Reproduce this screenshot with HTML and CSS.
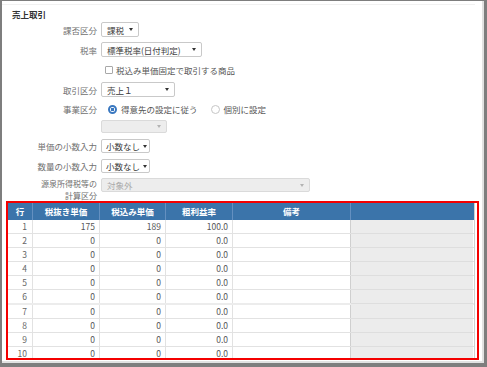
FILE: index.html
```html
<!doctype html>
<html lang="ja">
<head>
<meta charset="utf-8" />
<title>売上取引</title>
<link rel="stylesheet" href="styles.css">
</head>
<body>

<div class="frame">
	<div class="panel">
		<h1 class="title">売上取引</h1>

		<div class="form">
			<div class="row r1">
				<span class="lbl">課否区分</span>
				<div class="select w-38"><span>課税</span><i class="arrow"></i></div>
			</div>
			<div class="row">
				<span class="lbl">税率</span>
				<div class="select w-101"><span>標準税率(日付判定)</span><i class="arrow"></i></div>
			</div>
			<div class="row">
				<span class="lbl"></span>
				<label class="check"><i class="box"></i>税込み単価固定で取引する商品</label>
			</div>
			<div class="row">
				<span class="lbl">取引区分</span>
				<div class="select w-74"><span>売上１</span><i class="arrow"></i></div>
			</div>
			<div class="row r-radio">
				<span class="lbl">事業区分</span>
				<label class="radio on"><i class="dot"></i>得意先の設定に従う</label>
				<label class="radio"><i class="dot"></i>個別に設定</label>
			</div>
			<div class="row r-sub">
				<span class="lbl"></span>
				<div class="select off w-66"><span></span><i class="arrow"></i></div>
			</div>
			<div class="row r-dec">
				<span class="lbl">単価の小数入力</span>
				<div class="select w-49"><span>小数なし</span><i class="arrow"></i></div>
			</div>
			<div class="row r-dec">
				<span class="lbl">数量の小数入力</span>
				<div class="select w-49"><span>小数なし</span><i class="arrow"></i></div>
			</div>
			<div class="row r-tall">
				<span class="lbl">源泉所得税等の<br>計算区分</span>
				<div class="select off w-209"><span>対象外</span><i class="arrow"></i></div>
			</div>
		</div>

		<div class="grid-box">
			<div class="grid">
				<div class="gr head">
					<div>行</div><div>税抜き単価</div><div>税込み単価</div><div>粗利益率</div><div>備考</div><div></div>
				</div>
				<div class="gr"><div>1</div><div>175</div><div>189</div><div>100.0</div><div></div><div></div></div>
				<div class="gr"><div>2</div><div>0</div><div>0</div><div>0.0</div><div></div><div></div></div>
				<div class="gr"><div>3</div><div>0</div><div>0</div><div>0.0</div><div></div><div></div></div>
				<div class="gr"><div>4</div><div>0</div><div>0</div><div>0.0</div><div></div><div></div></div>
				<div class="gr"><div>5</div><div>0</div><div>0</div><div>0.0</div><div></div><div></div></div>
				<div class="gr seam"><div>6</div><div>0</div><div>0</div><div>0.0</div><div></div><div></div></div>
				<div class="gr"><div>7</div><div>0</div><div>0</div><div>0.0</div><div></div><div></div></div>
				<div class="gr"><div>8</div><div>0</div><div>0</div><div>0.0</div><div></div><div></div></div>
				<div class="gr"><div>9</div><div>0</div><div>0</div><div>0.0</div><div></div><div></div></div>
				<div class="gr"><div>10</div><div>0</div><div>0</div><div>0.0</div><div></div><div></div></div>
			</div>
		</div>
	</div>
</div>

</body>
</html>
```

FILE: styles.css
```css
:root {
	--label: #707070;
	--text: #3a3a3a;
	--line: #e2e2e2;
	--head: #3b74aa;
	font-family: "Noto Sans CJK JP", "Noto Sans", sans-serif;
	font-size: 8.5px;
}

body, html {
	margin: 0;
	padding: 0;
	background: #fff;
}

.frame {
	box-sizing: border-box;
	width: 487px;
	height: 367px;
	border-style: solid;
	border-color: #7e7e7e;
	border-width: 1px 3px 4px 2px;
	box-shadow: inset -2px -2px 0 #e2e2e2;
	overflow: hidden;
}

.panel {
	margin-top: 3px;
	margin-right: 9px;
	border-top: 1px solid #f1f1f1;
}

.title {
	margin: 0;
	padding: 3px 0 0 10px;
	height: 12px;
	line-height: 12px;
	font-size: 8.5px;
	font-weight: 600;
	color: #333;
}

/* form rows */

.form {
	display: flex;
	flex-direction: column;
	gap: 5px;
}

.row {
	display: flex;
	align-items: center;
	height: 15px;
}

.row.r1 { margin-top: 2px; }
.row.r-radio { height: 14px; }
.row.r-sub { height: 13px; margin-top: -1px; }
.row.r-dec { height: 14px; margin-top: 1px; }
.row.r-tall {
	height: 19px;
	align-items: flex-start;
}

.lbl {
	flex: none;
	width: 95px;
	margin-right: 4px;
	text-align: right;
	color: var(--label);
	line-height: 10px;
	white-space: nowrap;
}

.r-tall .lbl {
	font-size: 8px;
	line-height: 11.7px;
}

.select {
	box-sizing: border-box;
	display: flex;
	align-items: center;
	height: 15px;
	padding: 0 5px 0 5px;
	border: 1px solid #c9c9c9;
	border-radius: 2px;
	background: #fff;
	color: var(--text);
	white-space: nowrap;
}

.select span { margin-right: 3px; }

.r-dec .select { height: 14px; padding: 0 3px 0 4px; }
.r-sub .select { height: 13px; }
.r-tall .select { height: 14px; }

.select .arrow {
	margin-left: auto;
	flex: none;
	width: 0;
	height: 0;
	border-left: 2px solid transparent;
	border-right: 2px solid transparent;
	border-top: 3px solid #333;
}

.select.off {
	background: #ededed;
	border-color: #dadada;
	color: #a9a9a9;
}

.select.off .arrow { border-top-color: #b3b3b3; }

.w-38 { width: 38px; }
.w-101 { width: 101px; }
.w-74 { width: 74px; }
.w-66 { width: 66px; }
.w-49 { width: 49px; }
.w-209 { width: 209px; }

.check, .radio {
	display: flex;
	align-items: center;
	color: #555;
	white-space: nowrap;
}

.check .box {
	box-sizing: border-box;
	width: 8px;
	height: 8px;
	margin: 0 3px 0 4px;
	border: 1px solid #a8a8a8;
	border-radius: 1px;
}

.radio .dot {
	box-sizing: border-box;
	width: 9px;
	height: 9px;
	margin: 0 4px 0 7px;
	border: 1px solid #c6c6c6;
	border-radius: 50%;
}

.radio + .radio .dot { margin-left: 13px; }

.radio.on .dot {
	border: 2px solid #3a78c0;
	background: radial-gradient(circle, #3a78c0 0 1.6px, #fff 2px);
}

/* grid */

.grid-box {
	box-sizing: border-box;
	height: 159px;
	margin: 4px 0 0 4px;
	width: 473px;
	border: 2px solid #f40000;
	overflow: hidden;
}

.grid {
	width: 466px;
	border-right: 1px solid #d0d0d0;
}

.gr {
	display: grid;
	grid-template-columns: 25px 67px 66px 67px 118px 122px;
	box-sizing: border-box;
	height: 14px;
	border-bottom: 1px solid var(--line);
	color: #555;
	line-height: 13px;
}

.gr > div {
	border-right: 1px solid var(--line);
	text-align: right;
	padding-right: 4px;
	white-space: nowrap;
}

.gr > div:first-child {
	padding-right: 5px;
	color: #666;
}

.gr > div:nth-child(5) {
	border-right-color: #cfcfcf;
}

.gr > div:last-child {
	background: #ececec;
	border-right: none;
	border-bottom: 1px solid #dedede;
	margin-bottom: -1px;
}

.gr.seam {
	border-bottom: 2px solid #ececec;
	height: 15px;
}

.gr.head {
	height: 17px;
	line-height: 17px;
	background: var(--head);
	border-bottom: none;
	color: #fff;
	font-weight: 600;
}

.gr.head > div {
	text-align: center;
	padding: 0;
	color: #fff;
	background: var(--head);
	border-right: 1px solid #6490c0;
	border-bottom: none;
	margin: 0;
}

.gr.head > div:last-child { border-right: none; }
```
